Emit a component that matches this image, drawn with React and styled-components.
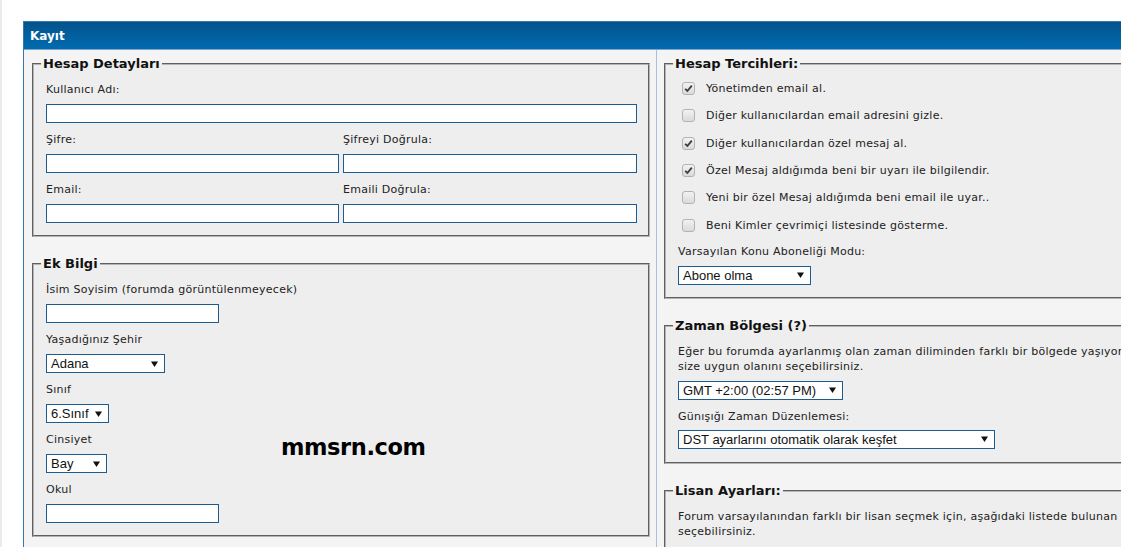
import React from 'react';
import styled, { createGlobalStyle } from 'styled-components';

const GlobalStyle = createGlobalStyle`
  html, body {
    margin: 0;
    padding: 0;
    background: #fff;
    overflow: hidden;
  }
  body {
    font-family: "DejaVu Sans", Verdana, sans-serif;
    font-size: 11px;
    letter-spacing: 0.25px;
    color: #222;
  }
`;

const Page = styled.div`
  position: relative;
  height: 547px;
  border-left: 2px solid #ebebeb;
  padding: 21px 0 0 21px;
  box-sizing: border-box;
`;

const Panel = styled.div`
  width: 1300px;
  border: 1px solid #3a78b0;
  border-bottom: none;
  background: #f4f4f4;
`;

const PanelHead = styled.div`
  height: 27px;
  line-height: 28px;
  padding-left: 6px;
  background: linear-gradient(#03538a, #016bb1);
  border-bottom: 1px solid #7ea6cf;
  color: #fff;
  font-weight: bold;
  font-size: 12px;
  letter-spacing: 0;
`;

const Columns = styled.div`
  display: flex;
  align-items: stretch;
`;

const Column = styled.div`
  width: ${p => p.$w}px;
  padding: 6px ${p => p.$pr}px 0 ${p => p.$pl}px;
  box-sizing: border-box;
  border-right: ${p => (p.$divider ? '1px solid #a7c0df' : 'none')};
  height: 500px;
`;

const Box = styled.fieldset`
  margin: 0 0 19px 0;
  padding: 10px 11px ${p => p.$pb ?? 12}px 12px;
  border: 2px groove #b4b4b4;
  background: #eeeeee;
  min-width: 0;
`;

const Legend = styled.legend`
  margin-left: -5px;
  padding: 0 2px;
  font-size: 13px;
  font-weight: bold;
  line-height: 16px;
  letter-spacing: 0;
  color: #111;
`;

const Body = styled.div`
  display: flex;
  flex-direction: column;
  align-items: flex-start;
  gap: ${p => p.$gap ?? 9}px;
  & > * {
    align-self: ${p => (p.$stretch ? 'stretch' : 'auto')};
  }
`;

const Pair = styled.div`
  display: grid;
  grid-template-columns: 293px 294px;
  column-gap: 4px;
`;

const Field = styled.div`
  display: flex;
  flex-direction: column;
  align-items: flex-start;
  margin-top: ${p => p.$mt ?? 0}px;
`;

const Label = styled.label`
  line-height: 16px;
  margin-bottom: ${p => p.$mb ?? 6}px;
  color: #222;
`;

const TextInput = styled.input`
  box-sizing: border-box;
  width: ${p => (p.$w ? `${p.$w}px` : '100%')};
  height: 19px;
  margin: 0;
  padding: 0 3px;
  border: 1px solid #1b5c93;
  background: #fff;
  outline: none;
  font: 13px "Liberation Sans", Arial, sans-serif;
`;

const SelectBox = styled.div`
  box-sizing: border-box;
  width: ${p => p.$w}px;
  height: 19px;
  display: flex;
  align-items: center;
  justify-content: space-between;
  padding: 0 6px 0 4px;
  border: 1px solid #1b5c93;
  background: #fff;
  font: 13px "Liberation Sans", Arial, sans-serif;
  letter-spacing: 0;
  color: #111;
  white-space: nowrap;
`;

const Arrow = () => (
  <svg width="7" height="6" viewBox="0 0 7 6">
    <path d="M0 0.5 H7 L3.5 6 Z" fill="#111" />
  </svg>
);

const Select = ({ w, value }) => (
  <SelectBox $w={w}>
    <span>{value}</span>
    <Arrow />
  </SelectBox>
);

const CheckList = styled.div`
  margin-top: -7px;
`;

const CheckRow = styled.div`
  display: flex;
  align-items: center;
  height: 27.3px;
  padding-left: 4px;
  gap: 11px;
`;

const CheckSquare = styled.span`
  width: 11px;
  height: 11px;
  border: 1px solid #b3b3b3;
  border-radius: 3px;
  background: linear-gradient(#f2f2f2, #dadada);
  display: flex;
  align-items: center;
  justify-content: center;
`;

const Check = ({ on }) => (
  <CheckSquare>
    {on && (
      <svg width="9" height="9" viewBox="0 0 9 9">
        <path d="M1.2 4.8 L3.4 7 L7.8 1.6" fill="none" stroke="#3c3c3c" strokeWidth="1.8" />
      </svg>
    )}
  </CheckSquare>
);

const Note = styled.p`
  margin: 0 0 ${p => p.$mb ?? 0}px;
  line-height: 15px;
  white-space: nowrap;
`;

const Watermark = styled.div`
  position: absolute;
  left: 279px;
  top: 434px;
  font-family: "DejaVu Sans", Verdana, sans-serif;
  font-weight: bold;
  font-size: 22.5px;
  letter-spacing: -0.4px;
  color: #000;
`;

const prefs = [
  ['Yönetimden email al.', true],
  ['Diğer kullanıcılardan email adresini gizle.', false],
  ['Diğer kullanıcılardan özel mesaj al.', true],
  ['Özel Mesaj aldığımda beni bir uyarı ile bilgilendir.', true],
  ['Yeni bir özel Mesaj aldığımda beni email ile uyar..', false],
  ['Beni Kimler çevrimiçi listesinde gösterme.', false],
];

export default function App() {
  return (
    <>
      <GlobalStyle />
      <Page>
        <Panel>
          <PanelHead>Kayıt</PanelHead>
          <Columns>
            <Column $w={633} $pl={8} $pr={6} $divider>
              <Box>
                <Legend>Hesap Detayları</Legend>
                <Body $stretch>
                  <Field>
                    <Label>Kullanıcı Adı:</Label>
                    <TextInput />
                  </Field>
                  <Pair>
                    <Field>
                      <Label>Şifre:</Label>
                      <TextInput type="password" />
                    </Field>
                    <Field>
                      <Label>Şifreyi Doğrula:</Label>
                      <TextInput type="password" />
                    </Field>
                  </Pair>
                  <Pair>
                    <Field>
                      <Label>Email:</Label>
                      <TextInput />
                    </Field>
                    <Field>
                      <Label>Emaili Doğrula:</Label>
                      <TextInput />
                    </Field>
                  </Pair>
                </Body>
              </Box>
              <Box>
                <Legend>Ek Bilgi</Legend>
                <Body>
                  <Field>
                    <Label>İsim Soyisim (forumda görüntülenmeyecek)</Label>
                    <TextInput $w={173} />
                  </Field>
                  <Field>
                    <Label>Yaşadığınız Şehir</Label>
                    <Select w={119} value="Adana" />
                  </Field>
                  <Field>
                    <Label>Sınıf</Label>
                    <Select w={63} value="6.Sınıf" />
                  </Field>
                  <Field>
                    <Label>Cinsiyet</Label>
                    <Select w={61} value="Bay" />
                  </Field>
                  <Field>
                    <Label>Okul</Label>
                    <TextInput $w={173} />
                  </Field>
                </Body>
              </Box>
            </Column>
            <Column $w={660} $pl={7} $pr={6}>
              <Box>
                <Legend>Hesap Tercihleri:</Legend>
                <CheckList>
                  {prefs.map(([text, on]) => (
                    <CheckRow key={text}>
                      <Check on={on} />
                      <span>{text}</span>
                    </CheckRow>
                  ))}
                </CheckList>
                <Field $mt={5}>
                  <Label>Varsayılan Konu Aboneliği Modu:</Label>
                  <Select w={133} value="Abone olma" />
                </Field>
              </Box>
              <Box $pb={13}>
                <Legend>Zaman Bölgesi (?)</Legend>
                <Body $gap={8}>
                  <Note $mb={-1}>
                    Eğer bu forumda ayarlanmış olan zaman diliminden farklı bir bölgede yaşıyorsanız, buradan
                    <br />
                    size uygun olanını seçebilirsiniz.
                  </Note>
                  <Select w={165} value="GMT +2:00 (02:57 PM)" />
                  <Field $mt={1}>
                    <Label $mb={5}>Günışığı Zaman Düzenlemesi:</Label>
                    <Select w={317} value="DST ayarlarını otomatik olarak keşfet" />
                  </Field>
                </Body>
              </Box>
              <Box>
                <Legend>Lisan Ayarları:</Legend>
                <Note>
                  Forum varsayılanından farklı bir lisan seçmek için, aşağıdaki listede bulunan lisanlardan birini
                  <br />
                  seçebilirsiniz.
                </Note>
              </Box>
            </Column>
          </Columns>
        </Panel>
        <Watermark>mmsrn.com</Watermark>
      </Page>
    </>
  );
}
